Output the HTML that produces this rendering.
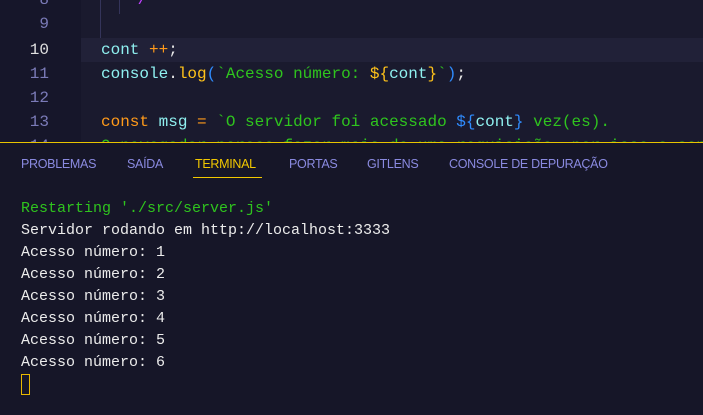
<!DOCTYPE html>
<html><head><meta charset="utf-8"><style>
*{margin:0;padding:0;box-sizing:border-box}
html,body{width:703px;height:415px;overflow:hidden;background:#161628}
#ed{position:absolute;left:0;top:0;width:703px;height:142px;background:#1a1a2e;overflow:hidden}
#gut{position:absolute;left:0;top:0;width:81px;height:142px;background:#16162a}
.ln{position:absolute;left:0;width:49px;text-align:right;font:16px "Liberation Mono",monospace;color:#7b7bb8;height:24px;line-height:24px}
.cl{position:absolute;left:101px;font:16px "Liberation Mono",monospace;white-space:pre;height:24px;line-height:24px;color:#8ff0f0;letter-spacing:0px}
#hl{position:absolute;left:81px;top:38px;width:622px;height:24px;background:#212138}
.g{color:#2fc41e}.o{color:#ff9a1a}.w{color:#e8e8e8}.y{color:#ffc21a}.b{color:#2f8cff}.c{color:#8ff0f0}
#pan{position:absolute;left:0;top:142px;width:703px;height:273px;background:#161628;border-top:1px solid #e8c400}
.tab{position:absolute;top:14px;font:12.5px "Liberation Sans",sans-serif;color:#8a8ae0;letter-spacing:-0.3px}
.t{position:absolute;left:21px;font:15px "Liberation Mono",monospace;color:#ececec;white-space:pre;line-height:22px;height:22px}
</style></head><body>
<div id="ed">
<div id="gut"></div>
<div id="hl"></div>
<div style="position:absolute;left:100px;top:0;width:1px;height:38px;background:#34345a"></div>
<div style="position:absolute;left:119px;top:0;width:1px;height:14px;background:#34345a"></div>
<div class="ln" style="top:-12px">8</div>
<div class="ln" style="top:12px">9</div>
<div class="ln" style="top:38px;color:#e0e0e0">10</div>
<div class="ln" style="top:62px">11</div>
<div class="ln" style="top:86px">12</div>
<div class="ln" style="top:110px">13</div>
<div class="ln" style="top:134px">14</div>
<div class="cl" style="top:-12px;left:128px;color:#c040ff">*/</div>
<div class="cl" style="top:38px">cont <span class="o">++</span><span class="w">;</span></div>
<div class="cl" style="top:62px">console<span class="w">.</span><span class="y">log</span><span class="b">(</span><span class="g">`Acesso número: </span><span class="y">${</span>cont<span class="y">}</span><span class="g">`</span><span class="b">)</span><span class="w">;</span></div>
<div class="cl" style="top:110px"><span class="o">const</span> msg <span class="o">=</span> <span class="g">`O servidor foi acessado </span><span class="b">${</span>cont<span class="b">}</span><span class="g"> vez(es).</span></div>
<div class="cl g" style="top:134px">O navegador parece fazer mais de uma requisição, por isso o contador</div>
</div>
<div id="pan">
<div class="tab" style="left:21px">PROBLEMAS</div>
<div class="tab" style="left:127px">SAÍDA</div>
<div class="tab" style="left:195px;color:#f2c800">TERMINAL</div>
<div style="position:absolute;left:193px;top:34px;width:69px;height:1px;background:#f2c800"></div>
<div class="tab" style="left:289px">PORTAS</div>
<div class="tab" style="left:367px">GITLENS</div>
<div class="tab" style="left:449px">CONSOLE DE DEPURAÇÃO</div>
<div class="t" style="top:55px;color:#2fc41e">Restarting './src/server.js'</div>
<div class="t" style="top:77px">Servidor rodando em http://localhost:3333</div>
<div class="t" style="top:99px">Acesso número: 1</div>
<div class="t" style="top:121px">Acesso número: 2</div>
<div class="t" style="top:143px">Acesso número: 3</div>
<div class="t" style="top:165px">Acesso número: 4</div>
<div class="t" style="top:187px">Acesso número: 5</div>
<div class="t" style="top:209px">Acesso número: 6</div>
<div style="position:absolute;left:21px;top:231px;width:9px;height:21px;border:1px solid #e8b800"></div>
</div>
</body></html>
